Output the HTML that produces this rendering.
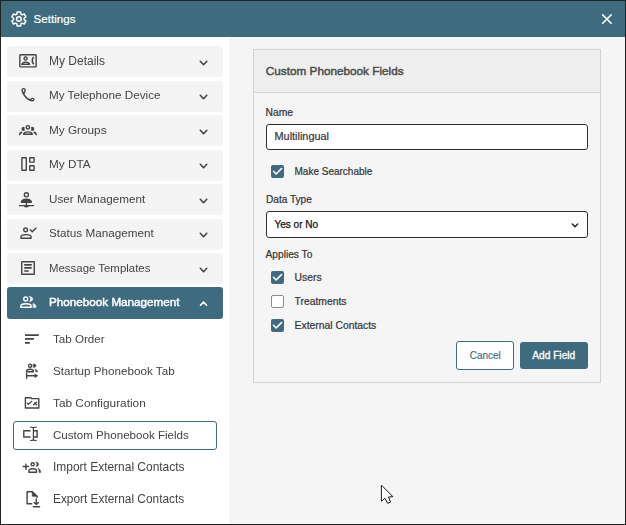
<!DOCTYPE html>
<html><head><meta charset="utf-8"><style>
html,body{margin:0;padding:0;}
body{width:626px;height:525px;position:relative;overflow:hidden;background:#fff;font-family:"Liberation Sans",sans-serif;}
.t{position:absolute;white-space:nowrap;line-height:normal;}
.g{will-change:transform;}
.r{position:absolute;}
.ic{position:absolute;overflow:visible;}
</style></head><body>
<div class="r" style="left:0;top:0;width:626px;height:37px;background:#3f6b7e"></div>
<svg class="ic" style="left:8px;top:8px" width="22" height="22" viewBox="0 0 22 22" fill="none" stroke="#fff" stroke-width="1.5" stroke-linecap="round" stroke-linejoin="round"><path d="M8.91 6.09 L9.20 3.90 L12.60 3.90 L12.89 6.09 L14.16 6.82 L16.20 5.98 L17.90 8.93 L16.15 10.26 L16.15 11.74 L17.90 13.07 L16.20 16.02 L14.16 15.18 L12.89 15.91 L12.60 18.10 L9.20 18.10 L8.91 15.91 L7.64 15.18 L5.60 16.02 L3.90 13.07 L5.65 11.74 L5.65 10.26 L3.90 8.93 L5.60 5.98 L7.64 6.82 Z"/><circle cx="10.9" cy="11" r="2.3"/></svg>
<div class="t" style="left:33.60px;top:12.10px;font-size:11.6px;color:#fff;font-weight:normal;-webkit-text-stroke:0.2px #fff;">Settings</div>
<svg class="ic" style="left:596px;top:8px" width="22" height="22" viewBox="0 0 22 22" fill="none" stroke="#fff" stroke-width="1.6" stroke-linecap="round" stroke-linejoin="round"><path d="M6.7 6.9L15.1 15.3M15.1 6.9L6.7 15.3"/></svg>
<div class="r" style="left:229px;top:37px;width:397px;height:488px;background:#f5f5f5"></div>
<div class="r" style="left:7px;top:46.00px;width:216px;height:31px;border-radius:3px;background:#f4f4f4"></div>
<div class="t g" style="left:48.70px;top:54.04px;font-size:12.0px;color:#444;font-weight:normal;">My Details</div>
<svg class="ic" style="left:193px;top:52.6px" width="22" height="22" viewBox="0 0 22 22" fill="none" stroke="#444" stroke-width="1.6" stroke-linecap="round" stroke-linejoin="round"><path d="M7.3 8.3l3.25 3.4 3.25-3.4"/></svg>
<svg class="ic" style="left:16px;top:50px" width="22" height="22" viewBox="0 0 22 22" fill="none" stroke="#444" stroke-width="1.4" stroke-linecap="round" stroke-linejoin="round"><rect x="3.85" y="4.75" width="16.3" height="12.1" rx=".7"/><circle cx="9.6" cy="8.6" r="1.55"/><path d="M5.9 14.4c.4-1.3 1.8-2.1 3.85-2.1s3.45.8 3.85 2.1z"/><path d="M17.4 7.4c-1.5 1.1-1.5 5.1 0 6.3" stroke-width="1.6"/></svg>
<div class="r" style="left:7px;top:80.50px;width:216px;height:31px;border-radius:3px;background:#f4f4f4"></div>
<div class="t g" style="left:48.70px;top:88.31px;font-size:11.7px;color:#444;font-weight:normal;">My Telephone Device</div>
<svg class="ic" style="left:193px;top:87.1px" width="22" height="22" viewBox="0 0 22 22" fill="none" stroke="#444" stroke-width="1.6" stroke-linecap="round" stroke-linejoin="round"><path d="M7.3 8.3l3.25 3.4 3.25-3.4"/></svg>
<svg class="ic" style="left:17px;top:84px" width="22" height="22" viewBox="0 0 22 22" fill="none" stroke="#444" stroke-width="1.4" stroke-linecap="round" stroke-linejoin="round"><path d="M7.8 5.2C7.4 4.6 6.6 4.5 5.8 4.8 5 5.1 4.9 6 5.2 7c.3 1 .8 2 1.3 2.8.4-.8 1.1-1.8 1.4-2.8.3-.8.2-1.4-.1-1.8z"/><path d="M6.4 9.6c1.5 3 3.7 5.3 6.6 6.4"/><path d="M12.8 15.8c.8-.5 1.8-1.3 2.7-1.4.8-.1 1.3.4 1.3 1.1 0 .8-.6 1.3-1.5 1.2-.9-.1-1.8-.5-2.5-.9z"/></svg>
<div class="r" style="left:7px;top:115.00px;width:216px;height:31px;border-radius:3px;background:#f4f4f4"></div>
<div class="t g" style="left:48.70px;top:123.24px;font-size:11.78px;color:#444;font-weight:normal;">My Groups</div>
<svg class="ic" style="left:193px;top:121.6px" width="22" height="22" viewBox="0 0 22 22" fill="none" stroke="#444" stroke-width="1.6" stroke-linecap="round" stroke-linejoin="round"><path d="M7.3 8.3l3.25 3.4 3.25-3.4"/></svg>
<svg class="ic" style="left:17px;top:119px" width="22" height="22" viewBox="0 0 22 22" fill="none" stroke="#444" stroke-width="1.4" stroke-linecap="round" stroke-linejoin="round"><circle cx="10.9" cy="8.3" r="1.7"/><path d="M7 8.4C5.7 8.4 5 9 5 9.9S5.7 11.4 7 11.4zM14.8 8.4c1.3 0 2 .6 2 1.5s-.7 1.5-2 1.5z" fill="#444" stroke-width="1.1"/><path d="M6.4 15.3c.5-1.6 2.2-2.4 4.5-2.4s4 .8 4.5 2.4z"/><path d="M2.7 15.4c.2-.9.8-1.6 1.8-2M19.1 15.4c-.2-.9-.8-1.6-1.8-2" stroke-width="1.7"/></svg>
<div class="r" style="left:7px;top:149.50px;width:216px;height:31px;border-radius:3px;background:#f4f4f4"></div>
<div class="t g" style="left:48.70px;top:157.26px;font-size:11.76px;color:#444;font-weight:normal;">My DTA</div>
<svg class="ic" style="left:193px;top:156.1px" width="22" height="22" viewBox="0 0 22 22" fill="none" stroke="#444" stroke-width="1.6" stroke-linecap="round" stroke-linejoin="round"><path d="M7.3 8.3l3.25 3.4 3.25-3.4"/></svg>
<svg class="ic" style="left:17px;top:153px" width="22" height="22" viewBox="0 0 22 22" fill="none" stroke="#444" stroke-width="1.4" stroke-linecap="round" stroke-linejoin="round"><rect x="4.9" y="4.7" width="4.4" height="12.6" rx=".5"/><rect x="12.7" y="4.7" width="4.4" height="4.45" rx=".5"/><rect x="12.7" y="12.7" width="4.4" height="4.6" rx=".5"/></svg>
<div class="r" style="left:7px;top:184.00px;width:216px;height:31px;border-radius:3px;background:#f4f4f4"></div>
<div class="t g" style="left:48.70px;top:192.32px;font-size:11.69px;color:#444;font-weight:normal;">User Management</div>
<svg class="ic" style="left:193px;top:190.6px" width="22" height="22" viewBox="0 0 22 22" fill="none" stroke="#444" stroke-width="1.6" stroke-linecap="round" stroke-linejoin="round"><path d="M7.3 8.3l3.25 3.4 3.25-3.4"/></svg>
<svg class="ic" style="left:16px;top:189px" width="22" height="22" viewBox="0 0 22 22" fill="none" stroke="#444" stroke-width="1.4" stroke-linecap="round" stroke-linejoin="round"><circle cx="10.4" cy="5.8" r="2.05"/><path d="M5.4 13.4c.3-2 2.3-3.1 5-3.1s4.7 1.1 5 3.1z" fill="#444"/><path d="M10.4 13.4v3M3.6 16.6h13.8"/><path d="M8.4 16.6c.4.9 1.1 1.3 2 1.3s1.6-.4 2-1.3z" fill="#444"/></svg>
<div class="r" style="left:7px;top:218.50px;width:216px;height:31px;border-radius:3px;background:#f4f4f4"></div>
<div class="t g" style="left:48.70px;top:226.30px;font-size:11.71px;color:#444;font-weight:normal;">Status Management</div>
<svg class="ic" style="left:193px;top:225.1px" width="22" height="22" viewBox="0 0 22 22" fill="none" stroke="#444" stroke-width="1.6" stroke-linecap="round" stroke-linejoin="round"><path d="M7.3 8.3l3.25 3.4 3.25-3.4"/></svg>
<svg class="ic" style="left:17px;top:222px" width="22" height="22" viewBox="0 0 22 22" fill="none" stroke="#444" stroke-width="1.4" stroke-linecap="round" stroke-linejoin="round"><circle cx="8.6" cy="7.85" r="1.9"/><path d="M3.9 16.2V15c0-1.5 2.1-2.4 5.1-2.4s5.1.9 5.1 2.4v1.2z"/><path d="M13.3 7.8l2 2 3.7-3.7"/></svg>
<div class="r" style="left:7px;top:253.00px;width:216px;height:31px;border-radius:3px;background:#f4f4f4"></div>
<div class="t g" style="left:48.70px;top:261.56px;font-size:11.43px;color:#444;font-weight:normal;">Message Templates</div>
<svg class="ic" style="left:193px;top:259.6px" width="22" height="22" viewBox="0 0 22 22" fill="none" stroke="#444" stroke-width="1.6" stroke-linecap="round" stroke-linejoin="round"><path d="M7.3 8.3l3.25 3.4 3.25-3.4"/></svg>
<svg class="ic" style="left:17px;top:257px" width="22" height="22" viewBox="0 0 22 22" fill="none" stroke="#444" stroke-width="1.4" stroke-linecap="round" stroke-linejoin="round"><rect x="4.75" y="4.7" width="12.5" height="12.6" rx=".6"/><path d="M7.8 7.9h6.4M7.8 10.9h6.4M7.8 14h3.4" stroke-width="1.6"/></svg>
<div class="r" style="left:7px;top:287px;width:216px;height:32px;border-radius:3px;background:#3f6b7e"></div>
<div class="t g" style="left:48.90px;top:295.21px;font-size:11.7px;color:#fff;font-weight:normal;-webkit-text-stroke:0.45px #fff;">Phonebook Management</div>
<svg class="ic" style="left:193px;top:294px" width="22" height="22" viewBox="0 0 22 22" fill="none" stroke="#fff" stroke-width="1.6" stroke-linecap="round" stroke-linejoin="round"><path d="M7.5 11.2l3.05-3.1 3.05 3.1"/></svg>
<svg class="ic" style="left:17px;top:291px" width="22" height="22" viewBox="0 0 22 22" fill="none" stroke="#fff" stroke-width="1.4" stroke-linecap="round" stroke-linejoin="round"><circle cx="8.7" cy="8" r="1.95"/><path d="M12.5 5.6c2 0 3.1 1 3.1 2.4s-1.1 2.4-3.1 2.4c.9-.8 1.1-1.6 1.1-2.4s-.2-1.6-1.1-2.4z" fill="#fff" stroke-width=".6"/><path d="M3.8 16.2v-1.3c0-1.5 2.2-2.2 5.2-2.2s5.2.7 5.2 2.2v1.3z"/><path d="M16.4 12.7c1.4.3 2.4 1.1 2.4 2.3v1.6h-2.4z" fill="#fff" stroke-width=".6"/></svg>
<div class="t g" style="left:52.90px;top:332.28px;font-size:11.62px;color:#444;font-weight:normal;">Tab Order</div>
<svg class="ic" style="left:21px;top:328px" width="22" height="22" viewBox="0 0 22 22" fill="none" stroke="#444" stroke-width="1.4" stroke-linecap="round" stroke-linejoin="round"><path d="M4 7.1h13.8M4 10.9h9M4 14.9h4.8" stroke-linecap="butt" stroke-width="1.6"/></svg>
<div class="t g" style="left:52.90px;top:364.24px;font-size:11.67px;color:#444;font-weight:normal;">Startup Phonebook Tab</div>
<svg class="ic" style="left:21px;top:360px" width="22" height="22" viewBox="0 0 22 22" fill="none" stroke="#444" stroke-width="1.4" stroke-linecap="round" stroke-linejoin="round"><circle cx="9.1" cy="5.7" r="1.55"/><path d="M12.4 4.1c1.7 0 2.6.7 2.6 1.65s-.9 1.65-2.6 1.65z" fill="#444" stroke-width=".5"/><path d="M5.6 11.8V11c0-1.1 1.4-1.8 3.4-1.8s3.4.7 3.4 1.8v.8z"/><path d="M14.4 9.4c1.4.4 2.2 1.4 2.3 2.6l-1.9-.6z" fill="#444" stroke-width=".6"/><path d="M5.6 13.2v5M5.6 15.8h9"/><path d="M14.2 14l2.6 1.8-2.6 1.8z" fill="#444" stroke-width=".6"/></svg>
<div class="t g" style="left:52.90px;top:396.09px;font-size:11.83px;color:#444;font-weight:normal;">Tab Configuration</div>
<svg class="ic" style="left:21px;top:392px" width="22" height="22" viewBox="0 0 22 22" fill="none" stroke="#444" stroke-width="1.4" stroke-linecap="round" stroke-linejoin="round"><path d="M4.4 16V5.8h5.5l.8.8h7.1V16z"/><path d="M6.3 11.2l1.2 1.1 3.1-2.9M12.6 12.7l3-2.5M13.4 10.9l2 1.9" stroke-width="1.3"/></svg>
<div class="t g" style="left:52.90px;top:428.81px;font-size:11.59px;color:#444;font-weight:normal;">Custom Phonebook Fields</div>
<svg class="ic" style="left:20px;top:423px" width="22" height="22" viewBox="0 0 22 22" fill="none" stroke="#444" stroke-width="1.4" stroke-linecap="round" stroke-linejoin="round"><path d="M10.6 7.8H3.8V14h6.8M13.8 7.8h3.3V14h-3.3" stroke-linejoin="miter" stroke-linecap="butt"/><path d="M13.4 4.8v12" stroke-width="1.2"/><path d="M10.6 4.1c1.2 0 2.8.2 2.8.9 0-.7 1.6-.9 2.8-.9M10.6 17.5c1.2 0 2.8-.2 2.8-.9 0 .7 1.6.9 2.8.9" stroke-width="1.2"/></svg>
<div class="t g" style="left:52.90px;top:459.98px;font-size:11.96px;color:#444;font-weight:normal;">Import External Contacts</div>
<svg class="ic" style="left:20px;top:456px" width="22" height="22" viewBox="0 0 22 22" fill="none" stroke="#444" stroke-width="1.4" stroke-linecap="round" stroke-linejoin="round"><path d="M3.2 10.5h5.4M5.9 8.1v5.3"/><circle cx="12.7" cy="8.3" r="1.6"/><path d="M16.2 6.2c1.6.2 2.4 1 2.4 2.1s-.8 1.9-2.4 2.1c.6-.8.8-1.4.8-2.1s-.2-1.3-.8-2.1z" fill="#444" stroke-width=".6"/><path d="M8.9 16.2v-1.3c0-1.4 1.7-2.1 3.8-2.1s3.8.7 3.8 2.1v1.3z"/><path d="M18.3 12.4c1.5.6 2.3 2 2.4 4h-1.5c0-1.6-.3-2.9-.9-4z" fill="#444" stroke-width=".6"/></svg>
<div class="t g" style="left:52.90px;top:492.06px;font-size:11.87px;color:#444;font-weight:normal;">Export External Contacts</div>
<svg class="ic" style="left:18px;top:485px" width="22" height="22" viewBox="0 0 22 22" fill="none" stroke="#444" stroke-width="1.4" stroke-linecap="round" stroke-linejoin="round"><path d="M13.7 18.7H9.1v-12h5.2l4.7 4.5v1.2"/><path d="M14.3 6.7v4.5H19z" fill="#444" stroke-width=".8"/><path d="M18.3 14v5.6M16.1 17.4l2.2 2.2 2.2-2.2M15.3 21.7h6.3"/></svg>
<div class="r" style="left:13px;top:421px;width:204px;height:29px;box-sizing:border-box;border:1px solid #3f6b7e;border-radius:3px"></div>
<div class="r" style="left:253px;top:49px;width:348px;height:334px;box-sizing:border-box;border:1px solid #d3d3d3;background:#f5f5f5"></div>
<div class="r" style="left:254px;top:50px;width:346px;height:42px;background:#eeeeee;border-bottom:1px solid #d3d3d3"></div>
<div class="t" style="left:265.80px;top:64.17px;font-size:11.75px;color:#4a4a4a;font-weight:normal;-webkit-text-stroke:0.45px #4a4a4a;">Custom Phonebook Fields</div>
<div class="t" style="left:265.60px;top:107.48px;font-size:10.3px;color:#333;font-weight:normal;-webkit-text-stroke:0.2px #333;">Name</div>
<div class="r" style="left:266px;top:124px;width:322px;height:26px;box-sizing:border-box;border:1px solid #2e2e2e;border-radius:3px;background:#fff"></div>
<div class="t" style="left:274.50px;top:129.94px;font-size:10.9px;color:#333;font-weight:normal;-webkit-text-stroke:0.2px #333;">Multilingual</div>
<div class="r" style="left:271px;top:165px;width:13px;height:13px;border-radius:2px;background:#3f6b7e"></div><svg class="ic" style="left:271px;top:165px" width="13" height="13" viewBox="0 0 13 13" fill="none" stroke="#fff" stroke-width="1.6" stroke-linecap="round" stroke-linejoin="round"><path d="M2.5 6.3l2.6 2.7 5.4-5.4"/></svg>
<div class="t" style="left:294.50px;top:166.45px;font-size:10.0px;color:#333;font-weight:normal;-webkit-text-stroke:0.2px #333;">Make Searchable</div>
<div class="t" style="left:266.00px;top:193.76px;font-size:10.1px;color:#333;font-weight:normal;-webkit-text-stroke:0.2px #333;">Data Type</div>
<div class="r" style="left:266px;top:211px;width:322px;height:27px;box-sizing:border-box;border:1px solid #2e2e2e;border-radius:3px;background:#fff"></div>
<div class="t" style="left:274.40px;top:219.30px;font-size:10.05px;color:#111;font-weight:normal;-webkit-text-stroke:0.25px #111;">Yes or No</div>
<svg class="ic" style="left:564px;top:214.7px" width="22" height="22" viewBox="0 0 22 22" fill="none" stroke="#222" stroke-width="1.4" stroke-linecap="round" stroke-linejoin="round"><path d="M8.3 9.1l2.7 2.7 2.7-2.7"/></svg>
<div class="t" style="left:265.50px;top:248.67px;font-size:10.2px;color:#333;font-weight:normal;-webkit-text-stroke:0.2px #333;">Applies To</div>
<div class="r" style="left:271px;top:271px;width:13px;height:13px;border-radius:2px;background:#3f6b7e"></div><svg class="ic" style="left:271px;top:271px" width="13" height="13" viewBox="0 0 13 13" fill="none" stroke="#fff" stroke-width="1.6" stroke-linecap="round" stroke-linejoin="round"><path d="M2.5 6.3l2.6 2.7 5.4-5.4"/></svg>
<div class="t" style="left:294.60px;top:272.33px;font-size:10.35px;color:#333;font-weight:normal;-webkit-text-stroke:0.2px #333;">Users</div>
<div class="r" style="left:271px;top:295px;width:13px;height:13px;box-sizing:border-box;border:1px solid #8a8a8a;border-radius:2px;background:#fff"></div>
<div class="t" style="left:294.60px;top:296.33px;font-size:10.35px;color:#333;font-weight:normal;-webkit-text-stroke:0.2px #333;">Treatments</div>
<div class="r" style="left:271px;top:319px;width:13px;height:13px;border-radius:2px;background:#3f6b7e"></div><svg class="ic" style="left:271px;top:319px" width="13" height="13" viewBox="0 0 13 13" fill="none" stroke="#fff" stroke-width="1.6" stroke-linecap="round" stroke-linejoin="round"><path d="M2.5 6.3l2.6 2.7 5.4-5.4"/></svg>
<div class="t" style="left:294.60px;top:320.33px;font-size:10.35px;color:#333;font-weight:normal;-webkit-text-stroke:0.2px #333;">External Contacts</div>
<div class="r" style="left:456px;top:341px;width:58px;height:29px;box-sizing:border-box;border:1px solid #3f6b7e;border-radius:3px;background:#fff"></div>
<div class="t" style="left:469.70px;top:350.45px;font-size:10.0px;color:#3f6b7e;font-weight:normal;-webkit-text-stroke:0.15px #3f6b7e;">Cancel</div>
<div class="r" style="left:520px;top:342px;width:68px;height:27px;border-radius:3px;background:#3f6b7e"></div>
<div class="t" style="left:532.20px;top:350.27px;font-size:10.2px;color:#fff;font-weight:normal;-webkit-text-stroke:0.3px #fff;">Add Field</div>
<svg class="ic" style="left:374px;top:478px" width="26" height="30" viewBox="0 0 26 30"><path d="M7.4 7.1V23.3L10.9 20.2L13.6 25.3L16.6 24L14.4 19L18.9 18.7Z" fill="#fff" stroke="#1a1a1a" stroke-width="1" stroke-linejoin="round"/></svg>
<div class="r" style="left:0;top:0;width:626px;height:525px;box-sizing:border-box;border:1px solid #222"></div>
</body></html>
